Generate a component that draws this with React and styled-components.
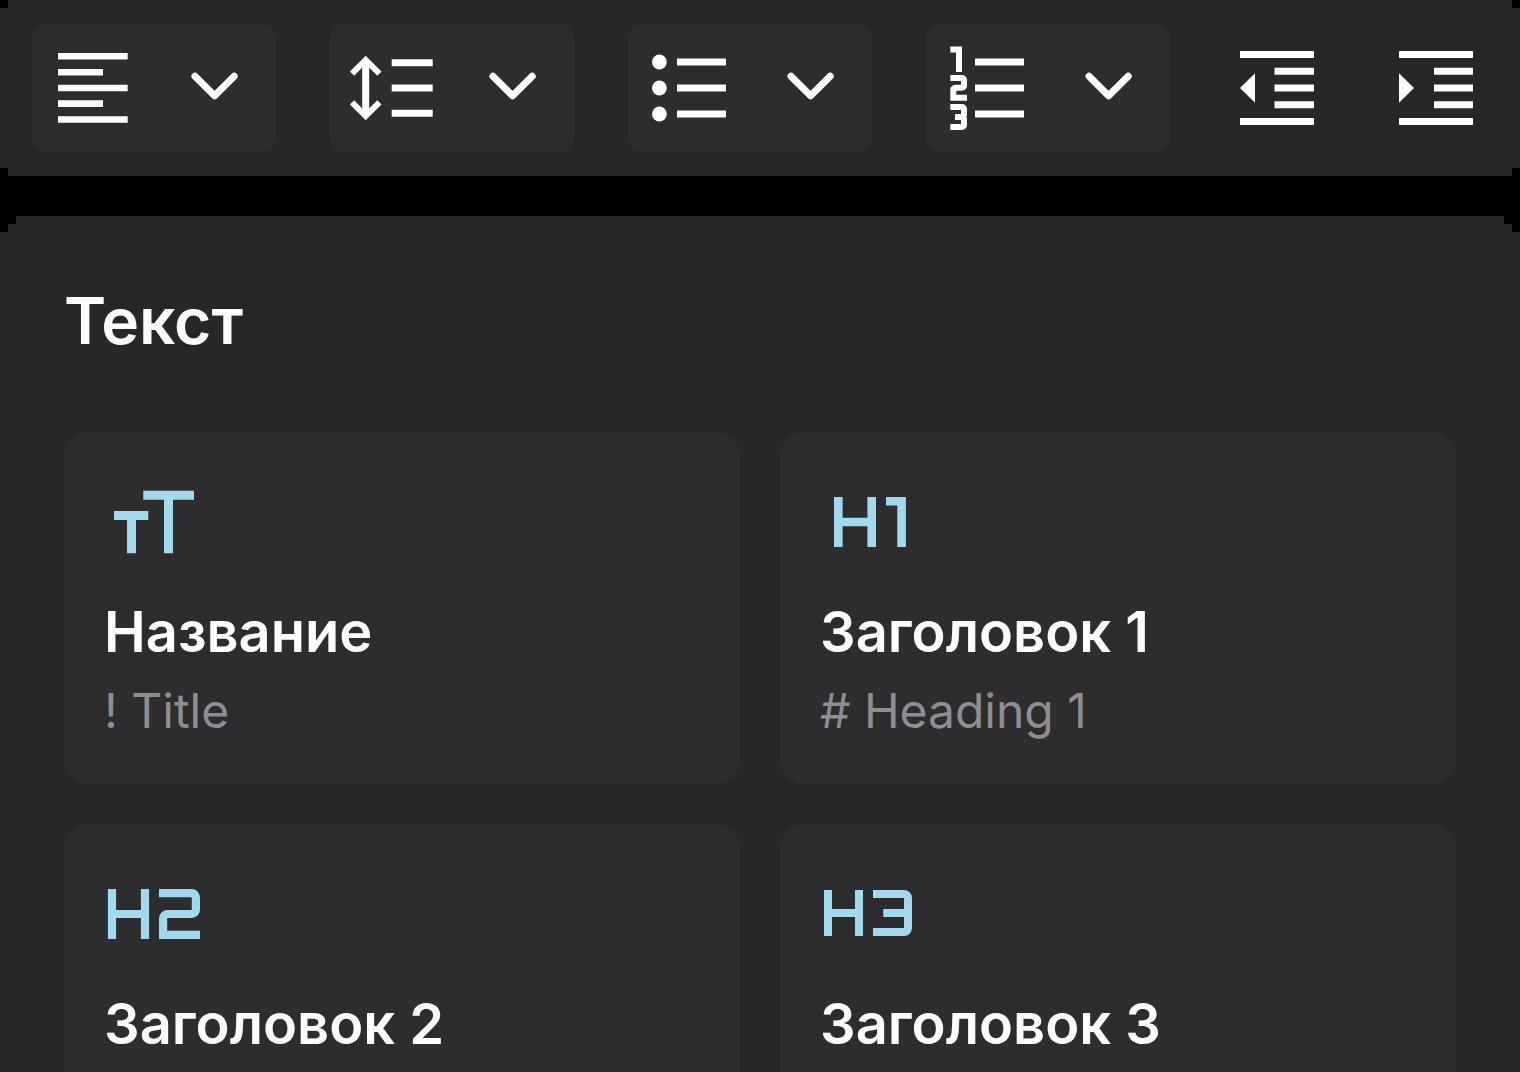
import React from 'react';
import styled, { createGlobalStyle } from 'styled-components';

const GlobalStyle = createGlobalStyle`
  * { box-sizing: border-box; }
  body {
    margin: 0;
    background: #000000;
    color: #fdfdff;
    font-family: Inter, "Noto Sans", sans-serif;
  }
  button {
    margin: 0;
    padding: 0;
    border: 0;
    background: none;
    color: inherit;
    font: inherit;
    text-align: left;
    cursor: pointer;
  }
`;

const Page = styled.main`
  display: flex;
  flex-direction: column;
  gap: 40px;
  height: 100vh;
  overflow: hidden;
`;

const Toolbar = styled.div`
  display: flex;
  align-items: center;
  justify-content: space-between;
  padding: 24px 32px;
  background: #262729;
  clip-path: polygon(
    8px 0, calc(100% - 8px) 0, calc(100% - 8px) 8px, 100% 8px,
    100% calc(100% - 8px), calc(100% - 8px) calc(100% - 8px), calc(100% - 8px) 100%,
    8px 100%, 8px calc(100% - 8px), 0 calc(100% - 8px), 0 8px, 8px 8px
  );
`;

const SplitButton = styled.div`
  display: grid;
  grid-template-columns: 1fr 1fr;
  width: 244px;
  height: 128px;
  border-radius: 14px;
  background: #2d2d2f;
`;

const ToolButton = styled.button`
  display: flex;
  align-items: center;
  justify-content: center;
  height: 128px;
  width: ${(p) => (p.$single ? '105px' : 'auto')};
`;

const ToolIcon = styled.svg`
  display: block;
  flex: none;
  fill: none;
  stroke: currentColor;
  stroke-width: 7;
`;

const Panel = styled.section`
  display: flex;
  flex: 1;
  flex-direction: column;
  gap: 70px;
  min-height: 0;
  padding: 64px 64px 0;
  background: #262729;
  clip-path: polygon(
    16px 0, calc(100% - 16px) 0, calc(100% - 16px) 8px, calc(100% - 8px) 8px,
    calc(100% - 8px) 16px, 100% 16px, 100% 100%, 0 100%, 0 16px, 8px 16px, 8px 8px, 16px 8px
  );
`;

const PanelTitle = styled.h2`
  margin: 0;
  font-size: 64px;
  font-weight: 600;
  line-height: 82px;
`;

const CardGrid = styled.div`
  display: grid;
  grid-template-columns: 1fr 1fr;
  gap: 40px;
`;

const Card = styled.button`
  display: flex;
  flex-direction: column;
  align-items: flex-start;
  min-height: 352px;
  padding: 40px;
  border-radius: 24px;
  background: #2d2d2f;
`;

const CardIcon = styled.svg`
  display: block;
  margin-bottom: 24px;
  fill: none;
  stroke: #a2d9ed;
  stroke-width: ${(p) => p.$weight};
`;

const CardName = styled.span`
  font-size: 56px;
  font-weight: 600;
  line-height: 73px;
`;

const CardHint = styled.span`
  margin-top: 12px;
  color: #8e8e90;
  font-size: 48px;
  font-weight: 400;
  line-height: 60px;
`;

const Chevron = () => (
  <ToolIcon width="84" height="84" viewBox="0 0 84 84" strokeLinecap="round" strokeLinejoin="round" aria-hidden="true">
    <path d="M22 30.3 41.6 49.8 61.2 30.3" />
  </ToolIcon>
);

const toolGroups = [
  {
    label: 'Выравнивание',
    icon: <path d="M7 10.3H76.7M7 26.3H52M7 42H76.7M7 57.6H52M7 73.5H76.7" strokeWidth="6.6" />,
  },
  {
    label: 'Межстрочный интервал',
    icon: (
      <>
        <path d="M3 27.6 16.7 13.9 30.4 27.6M3 56.4 16.7 70.1 30.4 56.4" strokeWidth="6" />
        <path d="M16.7 16V68M42.7 16.8H83.7M42.7 42H83.7M42.7 67.2H83.7" />
      </>
    ),
  },
  {
    label: 'Маркированный список',
    icon: (
      <>
        <g fill="currentColor" stroke="none">
          <circle cx="12.4" cy="16" r="7.4" />
          <circle cx="12.4" cy="42" r="7.4" />
          <circle cx="12.4" cy="68" r="7.4" />
        </g>
        <path d="M30 16H79M30 42H79M30 68H79" />
      </>
    ),
  },
  {
    label: 'Нумерованный список',
    icon: (
      <>
        <path d="M30 16H79M30 42H79M30 68H79" />
        <g strokeWidth="6">
          <path d="M5.3 3.6H14V26" />
          <path d="M5.3 32H17a2 2 0 0 1 2 2V39.8a2 2 0 0 1-2 2H10.3a2 2 0 0 0-2 2V51.8H22" />
          <path d="M5.3 61H17a2 2 0 0 1 2 2V69L17.6 71 19 73V79a2 2 0 0 1-2 2H5.3M10 71H18" />
        </g>
      </>
    ),
  },
];

const indentTools = [
  {
    label: 'Уменьшить отступ',
    icon: (
      <>
        <path d="M6 8.5H80M40.5 25.3H80M40.5 42H80M40.5 58.7H80M6 75.5H80" />
        <path d="M6 42 21 27.2V56.8Z" fill="currentColor" stroke="none" />
      </>
    ),
  },
  {
    label: 'Увеличить отступ',
    icon: (
      <>
        <path d="M6 8.5H80M41 25.3H80M41 42H80M41 58.7H80M6 75.5H80" />
        <path d="M21 42 6 27.2V56.8Z" fill="currentColor" stroke="none" />
      </>
    ),
  },
];

const cards = [
  {
    name: 'Название',
    hint: '! Title',
    weight: 9,
    icon: 'M39.3 23.2H90M64.5 23.2V81.3M10 43.5H44.3M27.5 43.5V81.3',
  },
  {
    name: 'Заголовок 1',
    hint: '# Heading 1',
    weight: 8.6,
    icon: 'M18.3 25V75M51.7 25V75M18.3 50H51.7M66 29.2H81.6V75',
  },
  {
    name: 'Заголовок 2',
    weight: 8.2,
    icon: 'M8 25V75M41 25V75M8 50H41M55 29.1H87.5a4.4 4.4 0 0 1 4.4 4.4V45.6a4.4 4.4 0 0 1-4.4 4.4H63.5a4.4 4.4 0 0 0-4.4 4.4V70.9H96',
  },
  {
    name: 'Заголовок 3',
    weight: 8,
    icon: 'M8 26V72M39 26V72M8 49H39M53 30H84a4 4 0 0 1 4 4V64a4 4 0 0 1-4 4H53M63.3 49H88',
  },
];

export default function App() {
  return (
    <>
      <GlobalStyle />
      <Page>
        <Toolbar role="toolbar" aria-label="Форматирование">
          {toolGroups.map(({ label, icon }) => (
            <SplitButton key={label}>
              <ToolButton type="button" aria-label={label}>
                <ToolIcon width="84" height="84" viewBox="0 0 84 84" aria-hidden="true">
                  {icon}
                </ToolIcon>
              </ToolButton>
              <ToolButton type="button" aria-label={`${label}: варианты`}>
                <Chevron />
              </ToolButton>
            </SplitButton>
          ))}
          {indentTools.map(({ label, icon }) => (
            <ToolButton key={label} type="button" $single aria-label={label}>
              <ToolIcon width="85" height="84" viewBox="0 0 85 84" aria-hidden="true">
                {icon}
              </ToolIcon>
            </ToolButton>
          ))}
        </Toolbar>
        <Panel>
          <PanelTitle>Текст</PanelTitle>
          <CardGrid>
            {cards.map(({ name, hint, weight, icon }) => (
              <Card key={name} type="button">
                <CardIcon width="100" height="100" viewBox="0 0 100 100" $weight={weight} aria-hidden="true">
                  <path d={icon} />
                </CardIcon>
                <CardName>{name}</CardName>
                {hint && <CardHint>{hint}</CardHint>}
              </Card>
            ))}
          </CardGrid>
        </Panel>
      </Page>
    </>
  );
}
